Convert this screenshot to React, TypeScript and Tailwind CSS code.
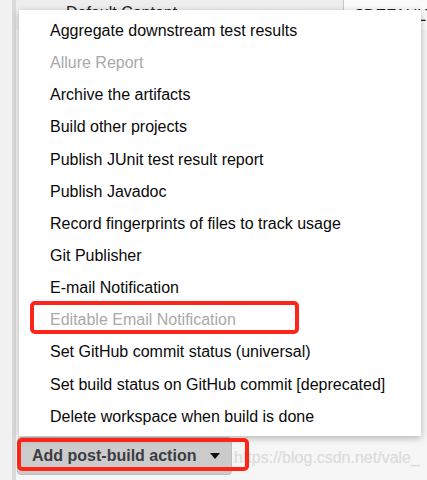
const items: [string, boolean][] = [
  ["Aggregate downstream test results", false],
  ["Allure Report", true],
  ["Archive the artifacts", false],
  ["Build other projects", false],
  ["Publish JUnit test result report", false],
  ["Publish Javadoc", false],
  ["Record fingerprints of files to track usage", false],
  ["Git Publisher", false],
  ["E-mail Notification", false],
  ["Editable Email Notification", true],
  ["Set GitHub commit status (universal)", false],
  ["Set build status on GitHub commit [deprecated]", false],
  ["Delete workspace when build is done", false],
];

function Menu() {
  return (
    <div className="absolute left-[19px] top-[10px] w-[402px] bg-white pt-[5px] pb-[3px] shadow-[0_2px_7px_rgba(0,0,0,0.28)]">
      {items.map(([label, disabled]) => (
        <div
          key={label}
          className={`h-[32.15px] whitespace-nowrap pl-[31px] leading-[32px] ${
            disabled ? "text-[#a9a9a9]" : "text-[#0a0a0a]"
          }`}
        >
          {label}
        </div>
      ))}
    </div>
  );
}

export default function App() {
  return (
    <div className="relative flex h-[480px] w-[427px] overflow-hidden bg-[#f6f6f6] font-['Liberation_Sans',Arial,sans-serif] text-[16px]">
      <div className="w-[12px] shrink-0 bg-[#f1f1f1]" />
      <div className="w-[4px] shrink-0 bg-[#dadada]" />

      <div className="flex flex-1 flex-col">
        {/* form row behind the menu */}
        <div className="flex h-[30px]">
          <div className="w-[327px] bg-[#eeeeee] pl-[50px] pt-[4px] leading-[18px] text-[#222]">Default Content</div>
          <div className="flex-1 whitespace-nowrap border-l border-[#c8c8c8] bg-[#fbfbfb] pl-[11px] pt-[7px] leading-[18px] text-[#222]">
            $DEFAULT_CONTENT
          </div>
        </div>

        <div className="flex flex-1 justify-end">
          <div className="flex w-[84px] flex-col bg-[#f0f0f0]">
            <div className="h-[160px] bg-[#e9e9e9]" />
            <div className="h-[73px] border-y border-[#cccccc] bg-[#f3f3f3] pl-[78px] pt-[14px] leading-[18px] text-[#4a5a8a]">/</div>
            <div className="h-[40px] pl-[79px] pt-[10px] leading-[18px] text-[#333]">t</div>
            <div className="flex-1 border-t border-[#d0d0d0]" />
          </div>
        </div>

        {/* bottom button row */}
        <div className="flex h-[43px] items-start">
          <button className="ml-[1px] flex h-[38px] w-[215px] items-center rounded-[4px] border border-[#bdbdbd] bg-[#cbcbcb] pl-[14px] font-bold text-[#3b3d42]">
            <span>Add post-build action</span>
            <span className="ml-[14px] h-0 w-0 border-x-[5px] border-t-[6px] border-x-transparent border-t-[#111]" />
          </button>
          <span className="ml-[2px] mt-[9px] whitespace-nowrap text-[#dddddd] [text-shadow:0_0_1px_rgba(0,0,0,0.08)]">
            https://blog.csdn.net/vale_
          </span>
        </div>
      </div>

      <Menu />

      {/* annotation boxes */}
      <div className="absolute left-[30px] top-[301px] h-[33px] w-[269px] rounded-[5px] border-[4px] border-[#ff2418]" />
      <div className="absolute left-[17px] top-[438px] h-[33px] w-[232px] rounded-[5px] border-[4px] border-[#ff2418]" />
    </div>
  );
}
